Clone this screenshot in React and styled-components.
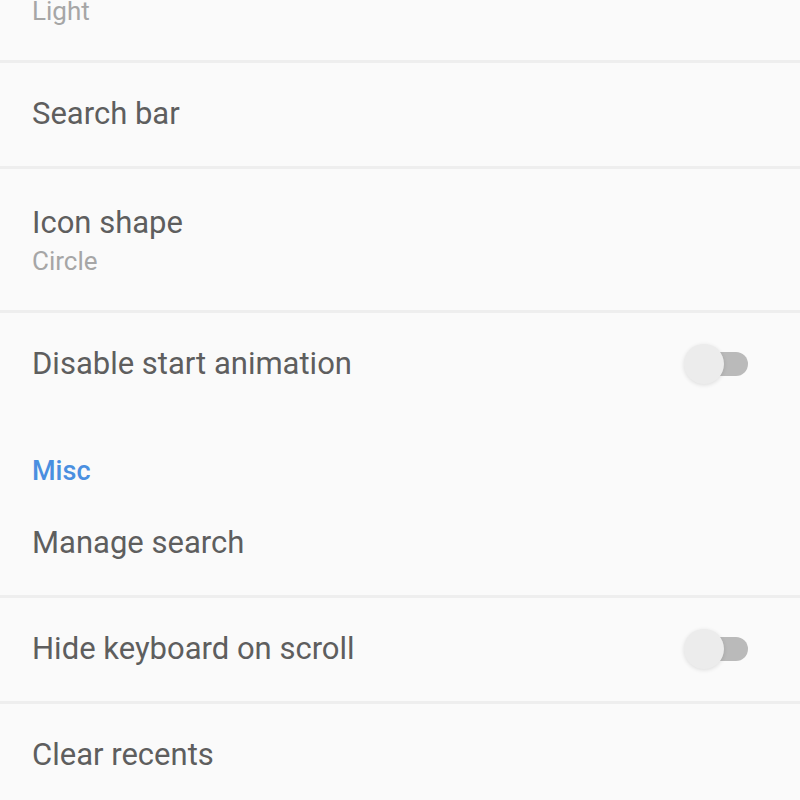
import React from 'react';
import styled, { createGlobalStyle } from 'styled-components';

const GlobalStyle = createGlobalStyle`
  html, body {
    margin: 0;
    padding: 0;
    background: #fafafa;
    overflow: hidden;
  }
  body {
    font-family: Roboto, "Noto Sans", "Liberation Sans", sans-serif;
  }
`

const Screen = styled.div`
  width: 800px;
  height: 800px;
  overflow: hidden;
  background: #fafafa;
`

// the list is scrolled: the first row's title sits above the top edge
const List = styled.div`
  display: flex;
  flex-direction: column;
  margin-top: -81px;
`

const Row = styled.div`
  display: flex;
  align-items: center;
  justify-content: space-between;
  box-sizing: border-box;
  height: ${p => (p.tall ? '144px' : '106px')};
  padding: ${p => (p.tall ? '4px 52px 0 32px' : '0 52px 2px 32px')};
  border-bottom: 3px solid ${p => (p.last ? 'transparent' : '#eeeeee')};
  flex-shrink: 0;
`

const TextBlock = styled.div`
  display: flex;
  flex-direction: column;
`

const Title = styled.div`
  font-size: 31px;
  line-height: 38px;
  color: #5e5e5e;
`

const Summary = styled.div`
  font-size: 26px;
  line-height: 38px;
  color: #a6a6a6;
`

const Header = styled.div`
  height: 73px;
  padding: 36px 32px 0;
  box-sizing: border-box;
  font-size: 27px;
  line-height: 32px;
  font-weight: 500;
  color: #4a8fe0;
  flex-shrink: 0;
`

const Track = styled.div`
  position: relative;
  width: 58px;
  height: 24px;
  border-radius: 12px;
  background: #bababa;
`

const Thumb = styled.div`
  position: absolute;
  left: -6px;
  top: -8px;
  width: 40px;
  height: 40px;
  border-radius: 50%;
  background: #ececec;
  box-shadow: 0 1px 4px rgba(0, 0, 0, 0.12);
`

const Switch = () => (
  <Track>
    <Thumb />
  </Track>
)

const Pref = ({ title, summary, toggle, last }) => (
  <Row tall={!!summary} last={last}>
    <TextBlock>
      <Title>{title}</Title>
      {summary && <Summary>{summary}</Summary>}
    </TextBlock>
    {toggle && <Switch />}
  </Row>
)

export default function App() {
  return (
    <Screen>
      <GlobalStyle />
      <List>
        <Pref title="Theme" summary="Light" />
        <Pref title="Search bar" />
        <Pref title="Icon shape" summary="Circle" />
        <Pref title="Disable start animation" toggle last />
        <Header>Misc</Header>
        <Pref title="Manage search" />
        <Pref title="Hide keyboard on scroll" toggle />
        <Pref title="Clear recents" last />
      </List>
    </Screen>
  );
}
